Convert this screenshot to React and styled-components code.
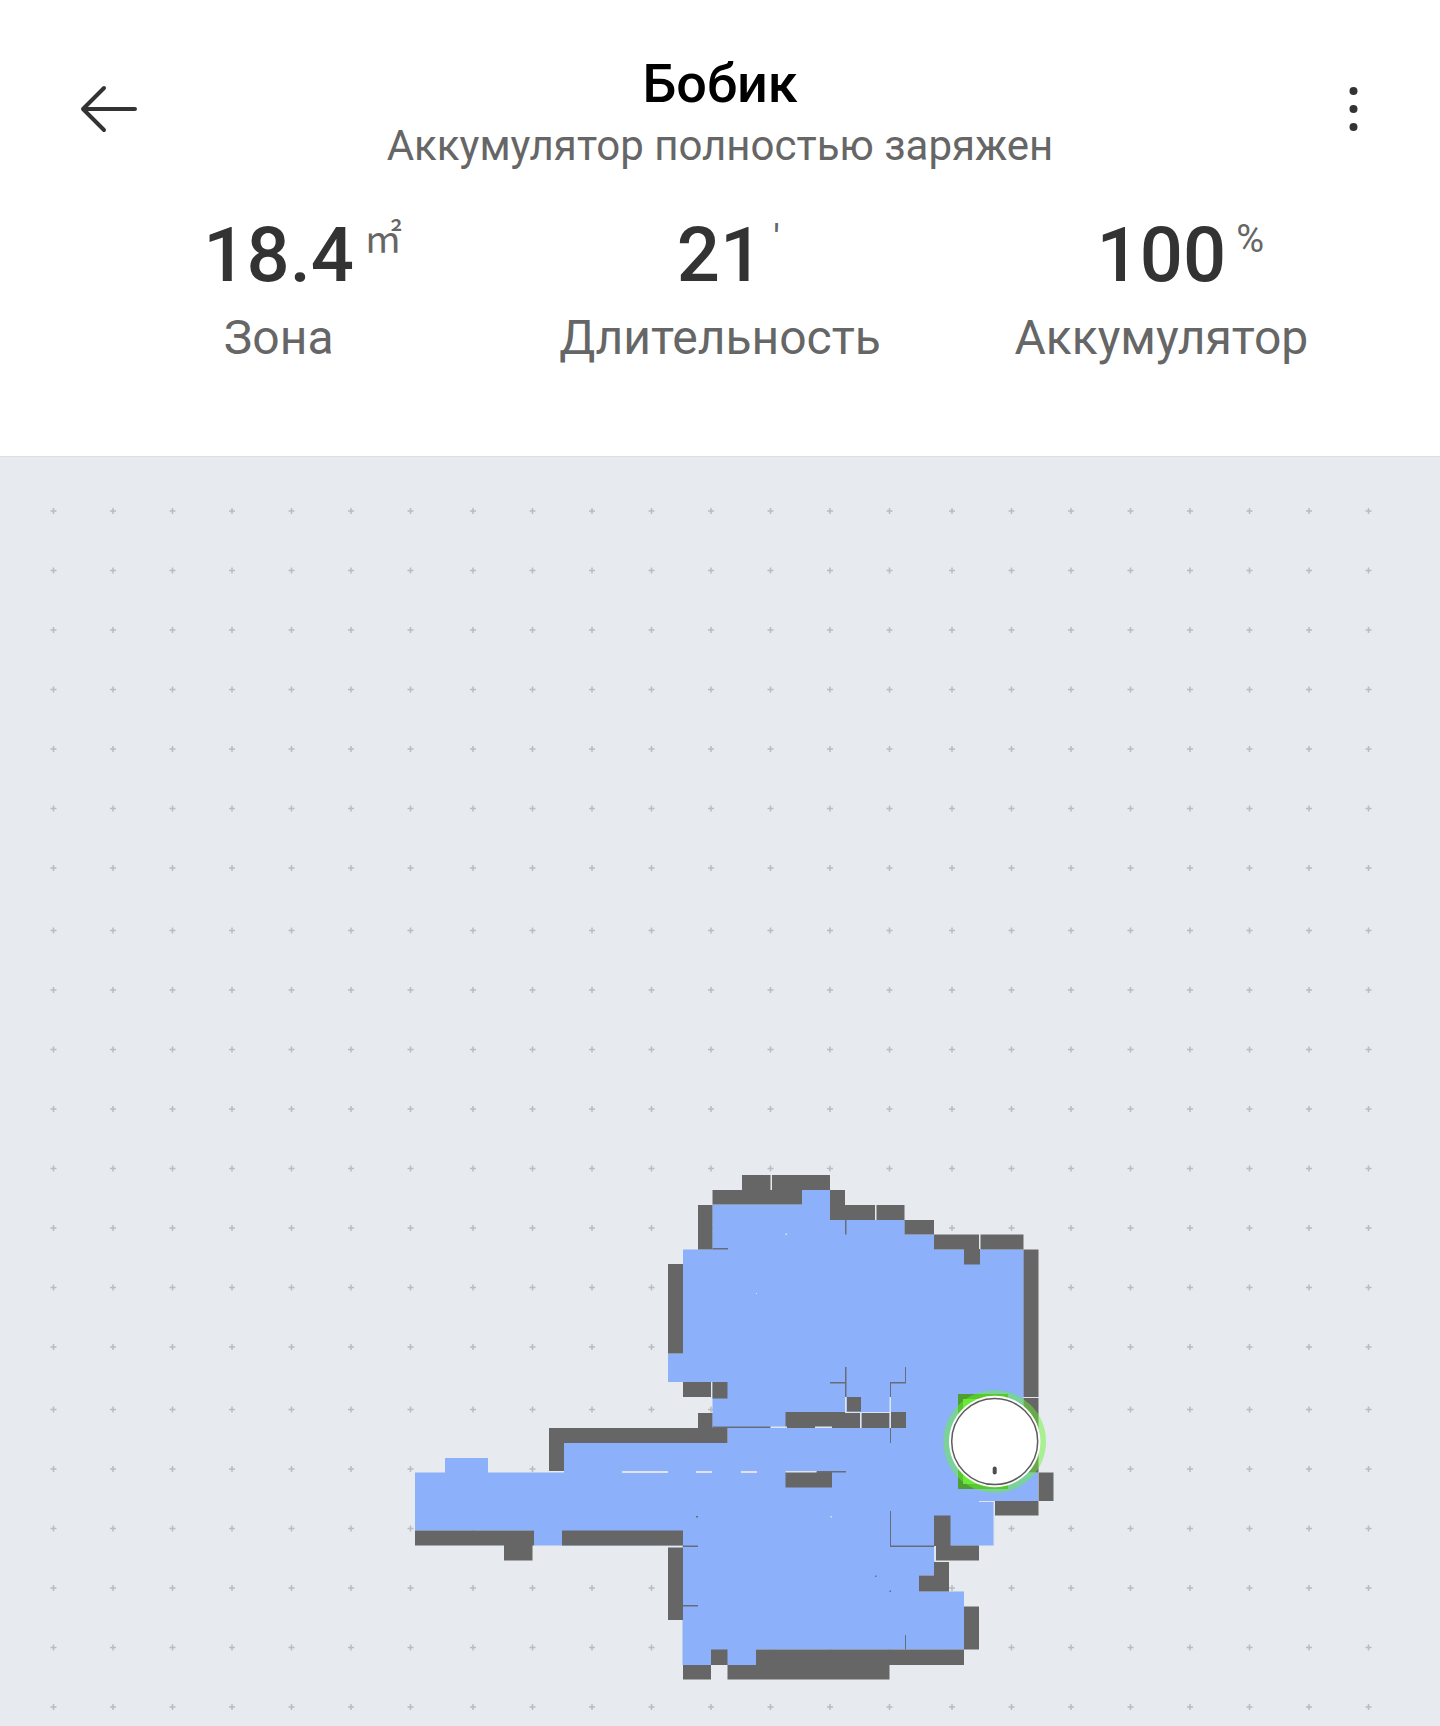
import React from 'react';
import styled, { createGlobalStyle } from 'styled-components';

const stats = [
    { id: 'area', value: '18.4', unit: '㎡', label: 'Зона' },
    { id: 'time', value: '21', unit: "'", label: 'Длительность' },
    { id: 'battery', value: '100', unit: '%', label: 'Аккумулятор' }
];

// grid marks, the step grows by 3 after the 7th and the 15th one
const gridStep = (start, i) => start + 59.5 * i + (i >= 7 ? 3 : 0) + (i >= 15 ? 3 : 0);
const columns = Array.from({ length: 23 }, (_, i) => gridStep(53.5, i));
const rows = Array.from({ length: 21 }, (_, i) => gridStep(511, i));

const floor = `
    M712.5 1204.5 H802 V1190 H830 V1220 H904.5 V1234.5 H934 V1249.5 H1023.5
    V1472.5 H1038 V1501 H994 V1545.5 H934.5 V1575.5 H919 V1591.5 H964
    V1649.5 H756 V1665 H682.5 V1545.5 H534 V1530.5 H415 V1472.5 H445
    V1458 H488 V1472.5 H564 V1443 H727.5 V1428 H712.5 V1382 H668 V1353.5
    H683 V1249.5 H712.5 Z
`;

// x1, y1, x2, y2
const walls = [
    [742, 1175, 770.5, 1190],
    [772, 1175, 830, 1190],
    [712.5, 1190, 802, 1204.5],
    [830, 1190, 845, 1220],
    [845, 1205, 875, 1220],
    [876.5, 1205, 904.5, 1220],
    [904.5, 1220, 934, 1234.5],
    [934, 1234.5, 979, 1249.5],
    [980.5, 1234.5, 1023.5, 1249.5],
    [964, 1249, 980, 1264.5],
    [1023.5, 1249.5, 1038.5, 1397],
    [1023.5, 1398, 1038.5, 1472.5],
    [698, 1205, 712.5, 1249.5],
    [668, 1264, 683, 1353.5],
    [683, 1382, 711, 1397],
    [712.5, 1382, 727.5, 1398.5],
    [698, 1413, 712.5, 1429],
    [549, 1428, 727.5, 1443],
    [549, 1443, 564, 1471],
    [785.5, 1412, 860, 1428],
    [861.5, 1413, 889.5, 1428],
    [891, 1412, 906, 1428],
    [847, 1397, 861, 1411.5],
    [785.5, 1472, 832, 1487.5],
    [415, 1530.5, 534, 1545.5],
    [504, 1545, 532.5, 1560.5],
    [562, 1530.5, 683, 1545.5],
    [668, 1547.5, 683, 1620],
    [683, 1665, 711, 1679.5],
    [711, 1649.5, 727.5, 1665],
    [727.5, 1665, 889.5, 1679.5],
    [756, 1649.5, 964, 1665],
    [964, 1606.5, 979, 1649.5],
    [919, 1575.5, 949, 1591.5],
    [934, 1562, 949, 1576],
    [936, 1545.5, 979, 1560.5],
    [934, 1515.5, 950.5, 1546],
    [995, 1501, 1038.5, 1515.5],
    [1038.5, 1472.5, 1053.5, 1501]
];

const thinWalls = [
    [845, 1220, 846.5, 1234.5],
    [845, 1367, 846.5, 1397],
    [830, 1382, 845, 1383.5],
    [905, 1367, 906, 1383],
    [890, 1382, 906, 1383.5],
    [890, 1383, 891, 1397],
    [890, 1428, 891, 1443],
    [712.5, 1248, 728, 1249.5],
    [712.5, 1426.5, 770, 1428],
    [816.5, 1471, 846, 1472.5],
    [890, 1511, 891, 1546],
    [890, 1545.5, 934, 1547],
    [683, 1545.5, 698, 1547],
    [683, 1605, 698, 1606.5],
    [905, 1635, 906, 1649.5],
    [696, 1516, 698, 1517.5],
    [875, 1575.5, 876.5, 1577],
    [889.5, 1590.5, 891, 1592]
];

const gaps = [
    [622, 1471, 668, 1473],
    [696, 1471, 712, 1473],
    [741, 1471, 757, 1473],
    [785.5, 1471, 816.5, 1472.5],
    [771, 1426.5, 787, 1428],
    [815, 1426.5, 832, 1428],
    [845, 1397, 846.5, 1413],
    [846, 1412, 890, 1413],
    [860, 1413, 861.5, 1428],
    [889.5, 1397, 891, 1428],
    [1023.5, 1397, 1038.5, 1398],
    [979, 1501, 994, 1502],
    [993.5, 1501, 995, 1545.5],
    [934, 1547, 936, 1561],
    [785.5, 1233.5, 787, 1235],
    [756, 1293, 757, 1294],
    [830.5, 1516, 832, 1517.5]
];

const Cells = ({ cells, fill }) => (
    <g fill={ fill }>
        {cells.map(([x1, y1, x2, y2]) => (
            <rect key={ `${x1}-${y1}` } x={ x1 } y={ y1 } width={ x2 - x1 } height={ y2 - y1 } />
        ))}
    </g>
);

const Robot = () => (
    <g>
        <rect x="958" y="1394" width="50" height="95" fill="#4d9f31" />
        <rect x="963" y="1399" width="40" height="85" fill="#6fe043" />
        <circle cx="994.7" cy="1441.5" r="51.3" fill="#66f530" fillOpacity="0.48" />
        <circle cx="994.7" cy="1441.5" r="45.7" fill="#ffffff" />
        <circle cx="994.7" cy="1441.5" r="43" fill="none" stroke="#5c5c5c" strokeWidth="1.5" />
        <rect x="992.7" y="1466.5" width="4" height="8" rx="2" fill="#4d4d4d" />
    </g>
);

const FloorMap = () => (
    <MapImage viewBox="0 457 1440 1269" role="img" aria-label="Карта">
        <g stroke="#b9bcc0" strokeWidth="1.5">
            {rows.map((y) => columns.map((x) => (
                <path key={ `${x}-${y}` } d={ `M${x - 3} ${y}h6M${x} ${y - 3}v6` } />
            )))}
        </g>
        <path d={ floor } fill="#8cb0f9" />
        <Cells cells={ walls } fill="#666666" />
        <Cells cells={ thinWalls } fill="#666c78" />
        <Cells cells={ gaps } fill="#dfe5f0" />
        <Robot />
    </MapImage>
);

const App = () => (
    <Page>
        <GlobalStyle />

        <Header>
            <TopBar>
                <IconButton aria-label="Назад">
                    <svg width="64" height="64" fill="none" stroke="#333333" strokeWidth="4" strokeLinecap="round" strokeLinejoin="round">
                        <path d="M58 30H6M27 9L6 30L27 51" />
                    </svg>
                </IconButton>

                <Heading>
                    <Title>Бобик</Title>
                    <Status>Аккумулятор полностью заряжен</Status>
                </Heading>

                <IconButton aria-label="Меню" $end>
                    <svg width="64" height="64" fill="#333333">
                        <circle cx="31.5" cy="12" r="4" />
                        <circle cx="31.5" cy="30" r="4" />
                        <circle cx="31.5" cy="48" r="4" />
                    </svg>
                </IconButton>
            </TopBar>

            <Stats>
                {stats.map(({ id, value, unit, label }) => (
                    <Stat key={ id }>
                        <Value>
                            { value }
                            <Unit>{ unit }</Unit>
                        </Value>
                        <Label>{ label }</Label>
                    </Stat>
                ))}
            </Stats>
        </Header>

        <FloorMap />
    </Page>
);

export default App;

const GlobalStyle = createGlobalStyle`
    body {
        margin: 0;
        background: #e7eaef;
        font-family: Roboto, "Noto Sans CJK SC", sans-serif;
    }
`

const Page = styled.main`
    overflow: hidden;
`

const Header = styled.header`
    padding: 52px 0 90px;
    background: #ffffff;
    border-bottom: 1px solid #dcdee1;
`

const TopBar = styled.div`
    display: grid;
    grid-template-columns: 1fr auto 1fr;
    align-items: center;
    padding: 0 54px;
`

const IconButton = styled.button`
    display: flex;
    justify-self: ${({ $end }) => $end ? 'end' : 'start'};
    margin-left: ${({ $end }) => $end ? '0' : '23px'};
    padding: 0;
    border: 0;
    background: none;
    cursor: pointer;
`

const Heading = styled.div`
    text-align: center;
`

const Title = styled.h1`
    margin: 0 0 6px;
    color: #000000;
    font-size: 54px;
    font-weight: 500;
    line-height: 64px;
`

const Status = styled.p`
    margin: 0;
    color: #666666;
    font-size: 42px;
    line-height: 48px;
`

const Stats = styled.div`
    display: grid;
    grid-template-columns: repeat(3, 1fr);
    margin-top: 45px;
    padding: 0 58px;
`

const Stat = styled.div`
    display: flex;
    flex-direction: column;
    align-items: center;
`

const Value = styled.div`
    position: relative;
    margin-bottom: 15px;
    color: #333333;
    font-size: 76px;
    font-weight: 500;
    line-height: 80px;
`

const Unit = styled.sup`
    position: absolute;
    top: 0;
    left: 100%;
    margin-left: 10px;
    color: #666666;
    font-size: 38px;
    font-weight: 400;
    line-height: 48px;
`

const Label = styled.div`
    color: #666666;
    font-size: 48px;
    line-height: 56px;
`

const MapImage = styled.svg`
    display: block;
    width: 100%;
`
